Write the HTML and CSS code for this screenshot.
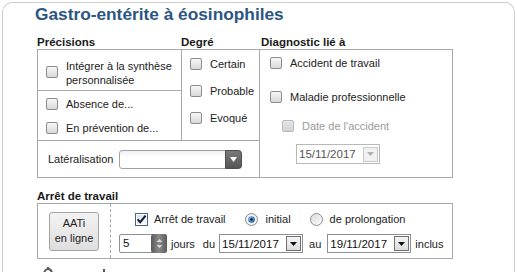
FILE: index.html
```html
<!DOCTYPE html>
<html lang="fr">
<head>
<meta charset="utf-8">
<title>Gastro-entérite à éosinophiles</title>
<link rel="stylesheet" href="styles.css">
</head>
<body>
<div class="panel">
  <h1 class="title">Gastro-entérite à éosinophiles</h1>

  <div class="heads">
    <div>Précisions</div>
    <div>Degré</div>
    <div class="h3">Diagnostic lié à</div>
  </div>

  <div class="grid">
    <div class="cell c-int">
      <label class="opt"><span class="cb"></span><span class="two">Intégrer à la synthèse<br>personnalisée</span></label>
    </div>

    <div class="cell c-deg">
      <label class="opt deg"><span class="cb"></span><span>Certain</span></label>
      <label class="opt deg"><span class="cb"></span><span>Probable</span></label>
      <label class="opt deg"><span class="cb"></span><span>Evoqué</span></label>
    </div>

    <div class="cell c-diag">
      <label class="opt d1"><span class="cb"></span><span>Accident de travail</span></label>
      <label class="opt d2"><span class="cb"></span><span>Maladie professionnelle</span></label>
      <label class="opt d3 disabled"><span class="cb"></span><span>Date de l'accident</span></label>
      <div class="date dis-date"><span class="dval">15/11/2017</span><span class="dbtn dis"><svg width="7" height="4" viewBox="0 0 7 4"><path d="M0 0h7L3.5 4z" fill="#b0b0b0"/></svg></span></div>
    </div>

    <div class="cell c-abs">
      <label class="opt abs"><span class="cb"></span><span>Absence de...</span></label>
      <label class="opt abs"><span class="cb"></span><span>En prévention de...</span></label>
    </div>

    <div class="cell c-lat">
      <span class="lat-label">Latéralisation</span>
      <div class="select"><span class="sel-val"></span><span class="sel-btn"><svg width="7" height="5" viewBox="0 0 7 5"><path d="M0 0h7L3.5 5z" fill="#fff"/></svg></span></div>
    </div>
  </div>

  <div class="sec">Arrêt de travail</div>
  <div class="arret">
    <div class="aati-cell"><button class="aati" type="button">AATi<br>en ligne</button></div>
    <div class="arret-main">
      <div class="arow r1">
        <span class="chk"><svg width="13" height="13" viewBox="0 0 13 13"><defs><linearGradient id="cg" x1="0" y1="0" x2="1" y2="1"><stop offset="0" stop-color="#cfe0f3"/><stop offset="1" stop-color="#f6f9fd"/></linearGradient></defs><rect x="0.5" y="0.5" width="12" height="12" fill="#fff" stroke="#46648c"/><rect x="2" y="2" width="9" height="9" fill="url(#cg)"/><path d="M2.6 6.4 L5.2 9.2 L10.6 2.6" fill="none" stroke="#1b1f2a" stroke-width="2.1"/></svg></span>
        <span class="lbl-arret">Arrêt de travail</span>
        <span class="radio on"><svg width="13" height="13" viewBox="0 0 13 13"><defs><radialGradient id="rg" cx="0.4" cy="0.4" r="0.6"><stop offset="0" stop-color="#9fd0f5"/><stop offset="1" stop-color="#1f5fa8"/></radialGradient></defs><circle cx="6.5" cy="6.5" r="6" fill="#f2f2f2" stroke="#8a8a8a"/><circle cx="6.5" cy="6.5" r="3.3" fill="url(#rg)"/><circle cx="6.5" cy="6.5" r="1.4" fill="#13335f"/></svg></span>
        <span class="lbl-init">initial</span>
        <span class="radio off"><svg width="13" height="13" viewBox="0 0 13 13"><defs><linearGradient id="rg2" x1="0" y1="0" x2="1" y2="1"><stop offset="0" stop-color="#dcdcdc"/><stop offset="1" stop-color="#fbfbfb"/></linearGradient></defs><circle cx="6.5" cy="6.5" r="6" fill="url(#rg2)" stroke="#8f8f8f"/></svg></span>
        <span class="lbl-prol">de prolongation</span>
      </div>
      <div class="arow r2">
        <div class="num"><span class="nval">5</span><span class="spin"><svg width="9" height="13" viewBox="0 0 9 13"><path d="M1.5 5h6L4.5 2z" fill="#d8d8d8"/><path d="M1.5 8h6L4.5 11z" fill="#d8d8d8"/></svg></span></div>
        <span class="jours">jours</span>
        <span class="du">du</span>
        <div class="date"><span class="dval">15/11/2017</span><span class="dbtn"><svg width="7" height="4" viewBox="0 0 7 4"><path d="M0 0h7L3.5 4z" fill="#111"/></svg></span></div>
        <span class="au">au</span>
        <div class="date"><span class="dval">19/11/2017</span><span class="dbtn"><svg width="7" height="4" viewBox="0 0 7 4"><path d="M0 0h7L3.5 4z" fill="#111"/></svg></span></div>
        <span class="inclus">inclus</span>
      </div>
    </div>
  </div>

  <div class="foot">
    <svg width="12" height="8" viewBox="0 0 12 8"><path d="M2 8 C2 4 4 2 6 2 C8 2 10 4 10 8" fill="none" stroke="#555" stroke-width="2"/><path d="M5 0.5h2" stroke="#555" stroke-width="1.5"/></svg>
    <svg class="dot" width="4" height="6" viewBox="0 0 4 6"><rect x="1" y="2" width="2" height="4" fill="#555"/></svg>
  </div>
</div>
</body>
</html>
```

FILE: styles.css
```css
* { box-sizing: border-box; }

body {
  margin: 0;
  background: #fff;
  font-family: "Liberation Sans", Arial, sans-serif;
  font-size: 11px;
  color: #222;
}

.panel {
  margin: 2px 2px 0 2px;
  height: 270px;
  border: 1px solid #cdcdcd;
  border-bottom: 0;
  border-radius: 10px 10px 0 0;
  padding-top: 1px;
  overflow: hidden;
}

.title {
  margin: 0 0 0 32px;
  font-size: 17.3px;
  line-height: 20px;
  font-weight: bold;
  color: #2b5682;
}

.heads {
  display: grid;
  grid-template-columns: 144px 78px 1fr;
  margin: 11px 0 0 34px;
  font-weight: bold;
  font-size: 11.5px;
  line-height: 14px;
  color: #1a1a1a;
}
.heads .h3 { padding-left: 2px; }

.grid {
  display: grid;
  grid-template-columns: 143px 77px 192px;
  grid-template-rows: 40px 49px 36px;
  gap: 1px;
  padding: 1px;
  margin-left: 34px;
  width: 416px;
  background: #a8a8a8;
}

.cell { background: #fff; }

.c-int { grid-column: 1; grid-row: 1; display: flex; align-items: center; padding: 6px 0 0 8px; }
.c-deg { grid-column: 2; grid-row: 1 / 3; display: flex; flex-direction: column; padding-left: 8px; }
.c-diag { grid-column: 3; grid-row: 1 / 4; display: flex; flex-direction: column; padding: 6px 0 0 10px; }
.c-abs { grid-column: 1; grid-row: 2; display: flex; flex-direction: column; justify-content: center; padding-left: 8px; }
.c-lat { grid-column: 1 / 3; grid-row: 3; display: flex; align-items: center; padding-left: 10px; }

.opt {
  display: flex;
  align-items: center;
  line-height: 14px;
}
.two { line-height: 14px; }

.cb {
  flex: none;
  width: 12px;
  height: 12px;
  margin-right: 8px;
  border: 1px solid #8c8c8c;
  border-radius: 2px;
  background: linear-gradient(#f7f7f7, #d9d9d9);
}
.c-int .cb { margin-top: -2px; }

.deg { height: 27px; }
.abs { height: 24px; }

.d1, .d2, .d3 { height: 14px; }
.d2 { margin-top: 20px; }
.d3 { margin-top: 15px; margin-left: 12px; }
.disabled { color: #9a9a9a; }
.disabled .cb { border-color: #b9b9b9; background: linear-gradient(#e6e6e6, #d2d2d2); }

.date {
  display: flex;
  align-items: center;
  justify-content: space-between;
  width: 84px;
  height: 19px;
  border: 1px solid #8b8f98;
  background: #fff;
  padding: 0 1px 0 2px;
  font-size: 11.5px;
  color: #111;
}
.dis-date {
  margin: 11px 0 0 26px;
  border-color: #b8b8b8;
  height: 20px;
  color: #555;
}
.dbtn {
  display: flex;
  align-items: center;
  justify-content: center;
  width: 15px;
  height: 15px;
  border: 1px solid #707070;
  background: linear-gradient(#f4f4f4, #dcdcdc);
}
.dbtn.dis { border-color: #c9c9c9; background: #f1f1f1; }

.lat-label { margin-right: 6px; }
.select {
  display: flex;
  width: 123px;
  height: 19px;
  border: 1px solid #a2a2a2;
  border-radius: 3px;
  background: linear-gradient(#f0f0f0, #fff 35%);
}
.sel-val { flex: 1; }
.sel-btn {
  display: flex;
  align-items: center;
  justify-content: center;
  width: 17px;
  margin: -1px -1px -1px 0;
  border-radius: 0 4px 4px 0;
  background: linear-gradient(#7a7a7a, #555);
  border: 1px solid #4d4d4d;
}

.sec {
  margin: 11px 0 0 34px;
  font-weight: bold;
  font-size: 11.5px;
  line-height: 14px;
  color: #1a1a1a;
}

.arret {
  display: flex;
  margin-left: 34px;
  width: 416px;
  height: 56px;
  border: 1px solid #a8a8a8;
}
.aati-cell {
  width: 73px;
  display: flex;
  align-items: center;
  justify-content: center;
  border-right: 1px dashed #a6a6a6;
}
.aati {
  width: 50px;
  height: 39px;
  padding: 0;
  border: 1px solid #a3a3a3;
  border-radius: 3px;
  background: linear-gradient(#f3f3f3, #dedede);
  font-family: "Liberation Sans", Arial, sans-serif;
  font-size: 11px;
  line-height: 15px;
  color: #222;
}

.arret-main {
  flex: 1;
  display: flex;
  flex-direction: column;
}
.arow { display: flex; align-items: center; }
.r1 { height: 18px; margin-top: 6px; padding-left: 24px; }
.r2 { height: 21px; margin-top: 5px; padding-left: 8px; }

.chk, .radio { display: flex; }
.lbl-arret { margin-left: 6px; }
.radio.on { margin-left: 19px; }
.lbl-init { margin-left: 8px; }
.radio.off { margin-left: 19px; }
.lbl-prol { margin-left: 7px; }

.num {
  display: flex;
  width: 48px;
  height: 19px;
  border: 1px solid #8b8f98;
  border-radius: 2px;
  font-size: 11.5px;
  color: #111;
}
.nval { flex: 1; padding-left: 3px; line-height: 17px; }
.spin {
  display: flex;
  align-items: center;
  justify-content: center;
  width: 16px;
  margin: -1px -1px -1px 0;
  border-radius: 3px;
  background: linear-gradient(90deg, #5a5a5a, #8a8a8a 50%, #5a5a5a);
}
.jours { margin-left: 4px; }
.du { margin: 0 4px 0 8px; }
.au { margin: 0 6px; }
.inclus { margin-left: 4px; }

.foot {
  display: flex;
  align-items: flex-start;
  margin: 8px 0 0 39px;
  height: 10px;
}
.foot .dot { margin-left: 48px; }
```
